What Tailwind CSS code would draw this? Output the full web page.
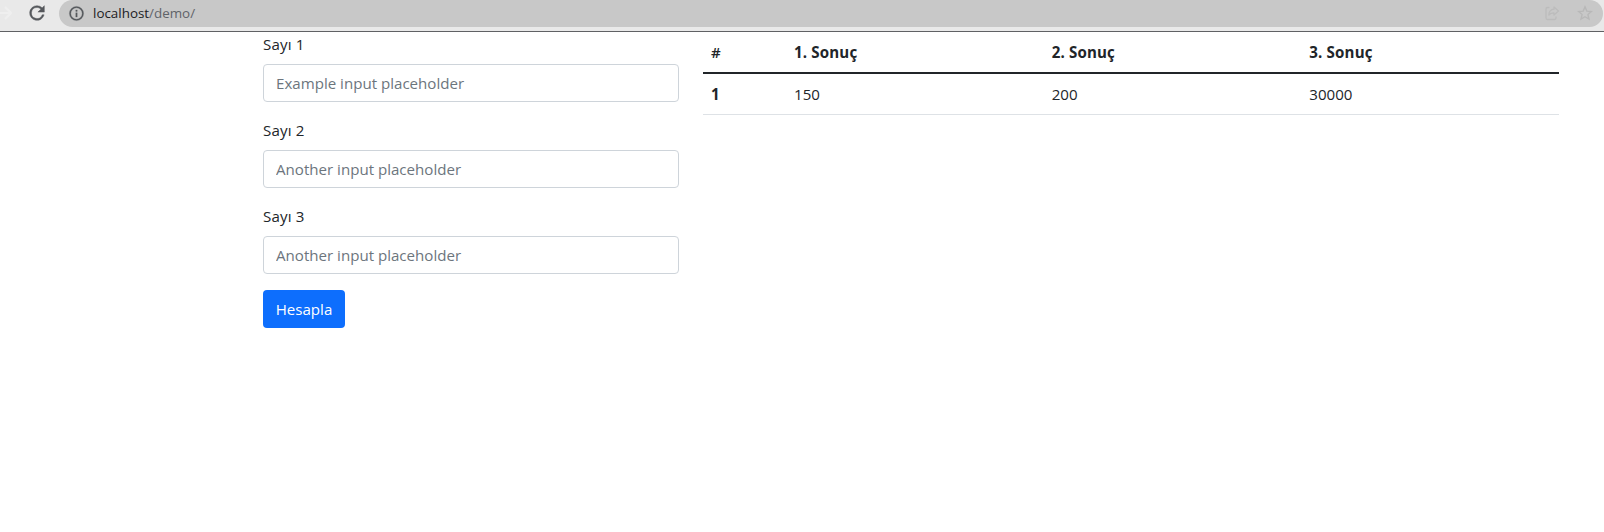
<!DOCTYPE html>
<html lang="tr">
<head>
<meta charset="utf-8">
<title>Demo</title>
<script src="https://cdn.jsdelivr.net/npm/@tailwindcss/browser@4"></script>
</head>
<body class="h-screen overflow-hidden bg-white font-['Open_Sans',sans-serif] text-[15.1px] leading-6 text-[#212529]">
<header class="flex h-8 items-start border-b border-[#606164] bg-[#e9e9e9]">
  <svg class="mt-[5px] h-4 w-3 shrink-0" viewBox="0 0 12 16" fill="none" stroke="#efefef" stroke-width="2"><path d="M0 8H10M5 2l6 6-6 6"/></svg>
  <svg class="mt-[2px] ml-[14px] size-[22px] shrink-0" viewBox="0 0 24 24" fill="#55585c" stroke="#55585c" stroke-width=".5"><path d="M17.65 6.35A7.96 7.96 0 0 0 12 4a8 8 0 1 0 7.73 10h-2.08A6 6 0 1 1 12 6c1.66 0 3.14.69 4.22 1.78L13 11h7V4z"/></svg>
  <div class="ml-[11px] mr-[1px] flex h-[27px] flex-1 items-center rounded-full bg-[#c8c8c8] pr-[10px] pl-[9px]">
    <svg class="mb-px size-[17px]" viewBox="0 0 24 24" fill="#55585c" stroke="#55585c" stroke-width=".4"><path d="M11 7h2v2h-2zm0 4h2v6h-2zm1-9a10 10 0 1 0 0 20 10 10 0 0 0 0-20zm0 18a8 8 0 1 1 0-16 8 8 0 0 1 0 16z"/></svg>
    <span class="mb-[2px] ml-2 flex-1 text-[13.4px] text-[#202124]">localhost<span class="text-[#5f6368]">/demo/</span></span>
    <svg class="mr-[17px] mb-[2px] size-4" viewBox="0 0 16 16" fill="none" stroke="#bcbcbc" stroke-width="1.3" stroke-linejoin="round"><path d="M5.500 2.500H3.500a1.500 1.500 0 0 0-1.500 1.500v9a1.500 1.500 0 0 0 1.500 1.500h7a1.500 1.500 0 0 0 1.500-1.500v-1.500M10 2l4.500 4L10 10V7.800C7.500 7.800 6 8.500 4.800 10 5 6.500 7 4.500 10 4.200z"/></svg>
    <svg class="mb-px size-4" viewBox="0 0 16 16" fill="none" stroke="#b8b8b8" stroke-width="1.4"><path d="M8 1.800l1.800 4.300 4.600.4-3.500 3 1.100 4.600L8 11.700l-4 2.400 1.100-4.600-3.500-3 4.600-.4z"/></svg>
  </div>
</header>
<main class="flex items-start gap-6 pr-[45px] pl-[263px]">
  <form class="w-[416px] shrink-0">
    <label for="a" class="mb-2 block tracking-[0.15px]">Sayı 1</label>
    <input id="a" placeholder="Example input placeholder" class="mb-4 block h-[38px] w-full rounded border border-[#ced4da] bg-white px-3 placeholder:text-[#6c757d]">
    <label for="b" class="mb-2 block tracking-[0.15px]">Sayı 2</label>
    <input id="b" placeholder="Another input placeholder" class="mb-4 block h-[38px] w-full rounded border border-[#ced4da] bg-white px-3 placeholder:text-[#6c757d]">
    <label for="c" class="mb-2 block tracking-[0.15px]">Sayı 3</label>
    <input id="c" placeholder="Another input placeholder" class="mb-4 block h-[38px] w-full rounded border border-[#ced4da] bg-white px-3 placeholder:text-[#6c757d]">
    <button type="button" class="h-[38px] w-[82px] rounded bg-[#0d6efd] text-white">Hesapla</button>
  </form>
  <table class="w-[856px] table-fixed border-separate border-spacing-0 text-left">
    <thead>
      <tr class="h-[42px] tracking-[0.15px] *:border-b-2 *:border-[#212529] *:px-2 *:py-0">
        <th class="w-[83px] font-semibold">#</th><th class="font-bold">1. Sonuç</th><th class="font-bold">2. Sonuç</th><th class="font-bold">3. Sonuç</th>
      </tr>
    </thead>
    <tbody>
      <tr class="h-[41px] *:border-b *:border-[#dee2e6] *:px-2 *:py-0">
        <th class="font-bold">1</th><td>150</td><td>200</td><td>30000</td>
      </tr>
    </tbody>
  </table>
</main>
</body>
</html>
